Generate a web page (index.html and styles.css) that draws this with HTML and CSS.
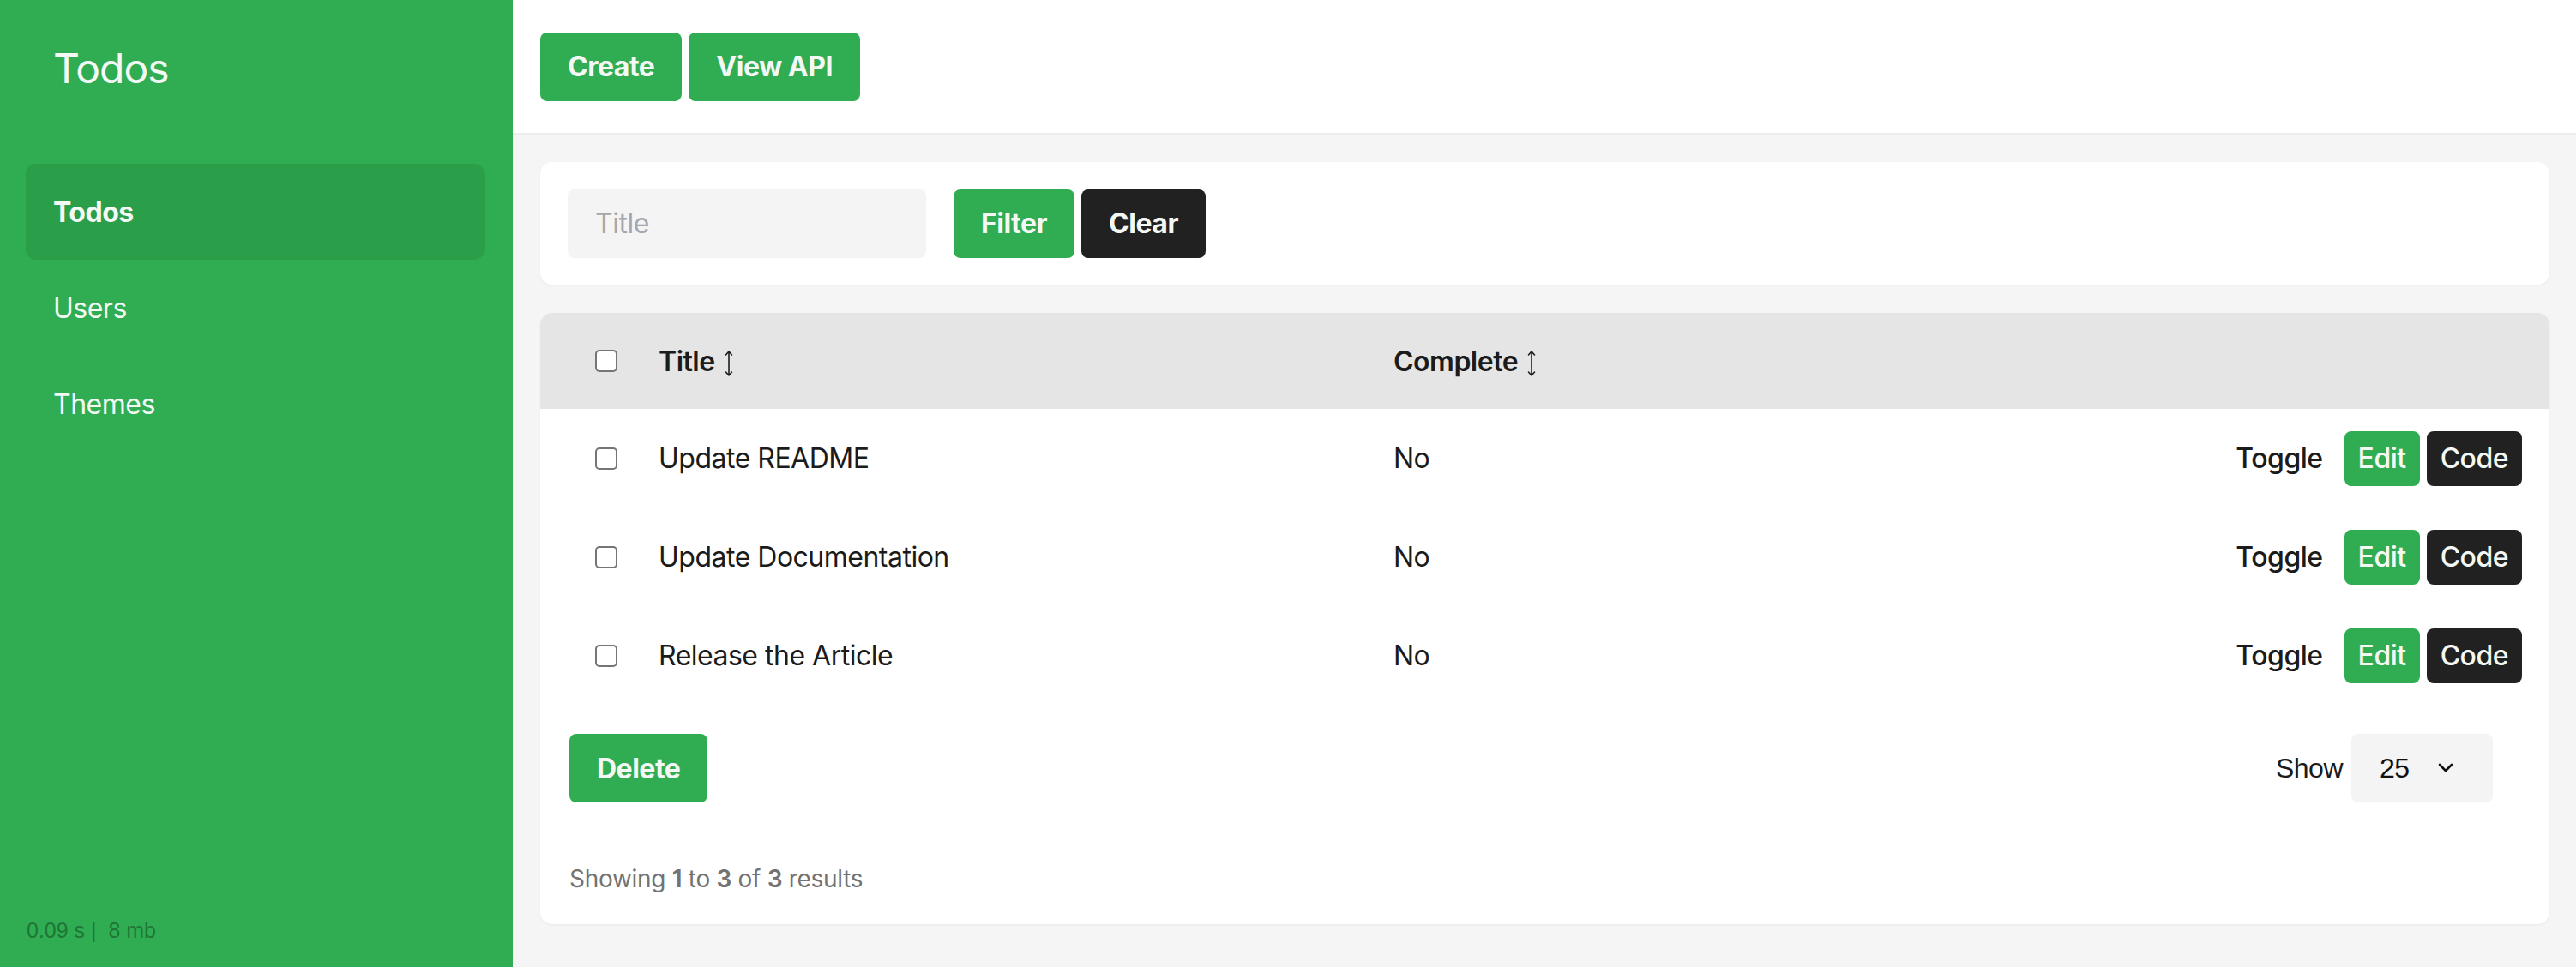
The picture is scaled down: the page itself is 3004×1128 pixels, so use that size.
FILE: index.html
```html
<!DOCTYPE html>
<html lang="en">
<head>
<meta charset="utf-8">
<title>Todos</title>
<link rel="stylesheet" href="styles.css">
</head>
<body>
<aside class="sidebar">
  <div class="brand">Todos</div>
  <nav class="nav">
    <a class="nav-item active">Todos</a>
    <a class="nav-item">Users</a>
    <a class="nav-item">Themes</a>
  </nav>
  <div class="stats">0.09 s |&nbsp; 8 mb</div>
</aside>
<main class="main">
  <header class="topbar">
    <button class="btn btn-green btn-lg">Create</button>
    <button class="btn btn-green btn-lg">View API</button>
  </header>
  <div class="content">
    <section class="card filter-card">
      <input class="input" type="text" placeholder="Title">
      <div class="filter-actions">
        <button class="btn btn-green btn-lg">Filter</button>
        <button class="btn btn-dark btn-lg">Clear</button>
      </div>
    </section>
    <section class="card table-card">
      <table class="table">
        <thead>
          <tr>
            <th class="col-check"><input type="checkbox" class="check"></th>
            <th class="col-title"><span class="sortable">Title<svg class="sort-icon" viewBox="0 0 12 32" width="12" height="32"><path d="M6 2 V30 M2.5 6 L6 2 L9.5 6 M2.5 26 L6 30 L9.5 26" fill="none" stroke="#1e1e1e" stroke-width="1.6" stroke-linecap="round" stroke-linejoin="round"/></svg></span></th>
            <th class="col-complete"><span class="sortable">Complete<svg class="sort-icon" viewBox="0 0 12 32" width="12" height="32"><path d="M6 2 V30 M2.5 6 L6 2 L9.5 6 M2.5 26 L6 30 L9.5 26" fill="none" stroke="#1e1e1e" stroke-width="1.6" stroke-linecap="round" stroke-linejoin="round"/></svg></span></th>
            <th class="col-actions"></th>
          </tr>
        </thead>
        <tbody>
          <tr>
            <td class="col-check"><input type="checkbox" class="check"></td>
            <td>Update README</td>
            <td>No</td>
            <td class="col-actions"><div class="actions"><span class="toggle">Toggle</span><button class="btn btn-green btn-sm">Edit</button><button class="btn btn-dark btn-sm">Code</button></div></td>
          </tr>
          <tr>
            <td class="col-check"><input type="checkbox" class="check"></td>
            <td>Update Documentation</td>
            <td>No</td>
            <td class="col-actions"><div class="actions"><span class="toggle">Toggle</span><button class="btn btn-green btn-sm">Edit</button><button class="btn btn-dark btn-sm">Code</button></div></td>
          </tr>
          <tr>
            <td class="col-check"><input type="checkbox" class="check"></td>
            <td>Release the Article</td>
            <td>No</td>
            <td class="col-actions"><div class="actions"><span class="toggle">Toggle</span><button class="btn btn-green btn-sm">Edit</button><button class="btn btn-dark btn-sm">Code</button></div></td>
          </tr>
        </tbody>
      </table>
      <div class="table-footer">
        <button class="btn btn-green btn-lg">Delete</button>
        <div class="per-page">
          <span class="per-page-label">Show</span>
          <div class="select"><span>25</span><svg class="chevron" viewBox="0 0 20 12" width="20" height="12"><path d="M3 2 L10 9 L17 2" fill="none" stroke="#111" stroke-width="2.6" stroke-linecap="round" stroke-linejoin="round"/></svg></div>
        </div>
      </div>
      <p class="results">Showing <b>1</b> to <b>3</b> of <b>3</b> results</p>
    </section>
  </div>
</main>
</body>
</html>
```
FILE: styles.css
```css
* { box-sizing: border-box; }

html, body {
  margin: 0;
  height: 100%;
}

body {
  display: flex;
  min-height: 1128px;
  font-family: Inter, "Noto Sans", "Liberation Sans", sans-serif;
  color: #1b1b1b;
  background: #f5f5f5;
  letter-spacing: -0.5px;
}

/* Sidebar */
.sidebar {
  width: 598px;
  flex: 0 0 598px;
  background: #30ad52;
  display: flex;
  flex-direction: column;
  color: #f4f9f5;
}

.brand {
  height: 158px;
  display: flex;
  align-items: center;
  padding-left: 62px;
  font-size: 48px;
  font-weight: 400;
  letter-spacing: -1px;
}

.nav {
  display: flex;
  flex-direction: column;
  margin: 33px 33px 0 30px;
}

.nav-item {
  height: 112px;
  display: flex;
  align-items: center;
  padding-left: 32px;
  font-size: 32px;
  border-radius: 12px;
  color: #f4f9f5;
}

.nav-item.active {
  background: #2b9e4a;
  font-weight: 700;
}

.stats {
  margin-top: auto;
  padding: 0 0 28px 31px;
  font-size: 25px;
  color: #1f7636;
  font-family: "Liberation Sans", Arial, sans-serif;
  letter-spacing: 0;
}

/* Main */
.main {
  flex: 1;
  display: flex;
  flex-direction: column;
  min-width: 0;
}

.topbar {
  height: 158px;
  background: #ffffff;
  display: flex;
  align-items: center;
  gap: 8px;
  padding: 0 32px;
  border-bottom: 2px solid #ededed;
}

.content {
  display: flex;
  flex-direction: column;
  gap: 33px;
  padding: 32px 31px 50px 32px;
}

.card {
  background: #ffffff;
  border-radius: 14px;
  box-shadow: 0 1px 3px rgba(0, 0, 0, 0.05);
}

/* Buttons */
.btn {
  border: none;
  font-family: inherit;
  letter-spacing: -0.5px;
  color: #f3f8f4;
  cursor: pointer;
  border-radius: 8px;
}

.btn-green { background: #30ad52; }
.btn-dark { background: #212121; }

.btn-lg {
  height: 80px;
  padding: 0 32px;
  font-size: 32px;
  font-weight: 700;
}

.btn-sm {
  height: 64px;
  padding: 0 16px;
  font-size: 32px;
  font-weight: 500;
}

/* Filter card */
.filter-card {
  height: 143px;
  display: flex;
  align-items: center;
  gap: 32px;
  padding: 0 32px;
}

.input {
  width: 418px;
  height: 80px;
  border: none;
  background: #f4f4f4;
  border-radius: 8px;
  padding: 0 32px;
  font-size: 32px;
  font-family: inherit;
  letter-spacing: -0.5px;
  color: #1b1b1b;
  outline: none;
}

.input::placeholder { color: #a6a6ae; }

.filter-actions {
  display: flex;
  gap: 8px;
}

/* Table */
.table-card {
  overflow: hidden;
}

.table {
  width: 100%;
  border-collapse: collapse;
  font-size: 32px;
}

.table thead tr {
  height: 112px;
  background: #e5e5e5;
}

.table tbody tr {
  height: 115px;
}

.table th {
  text-align: left;
  font-weight: 600;
  padding: 0;
}

.table td {
  padding: 0;
}

.col-check {
  width: 138px;
  padding-left: 64px !important;
}

.col-title {
  width: 857px;
}

.col-actions {
  text-align: right;
  padding-right: 32px !important;
}

.sortable {
  display: inline-flex;
  align-items: center;
  gap: 10px;
}

.sort-icon {
  margin-top: 6px;
}

.check {
  appearance: none;
  -webkit-appearance: none;
  display: block;
  width: 26px;
  height: 26px;
  margin: 0;
  border: 2px solid #757575;
  border-radius: 5px;
  background: #fff;
}

.actions {
  display: inline-flex;
  align-items: center;
  gap: 8px;
}

.toggle {
  font-weight: 500;
  margin-right: 17px;
}

.table-footer {
  display: flex;
  align-items: center;
  justify-content: space-between;
  padding: 34px 66px 0 34px;
}

.per-page {
  display: flex;
  align-items: center;
  gap: 10px;
  font-size: 32px;
  font-family: "Liberation Sans", Arial, sans-serif;
  letter-spacing: -0.5px;
}

.select {
  width: 165px;
  height: 80px;
  background: #f4f4f4;
  border-radius: 8px;
  display: flex;
  align-items: center;
  padding-left: 33px;
  gap: 32px;
  color: #111;
}

.results {
  margin: 69px 0 0 0;
  padding: 0 0 33px 34px;
  font-size: 28px;
  line-height: 40px;
  color: #737373;
  letter-spacing: -0.3px;
}

.results b {
  font-weight: 600;
}
```
